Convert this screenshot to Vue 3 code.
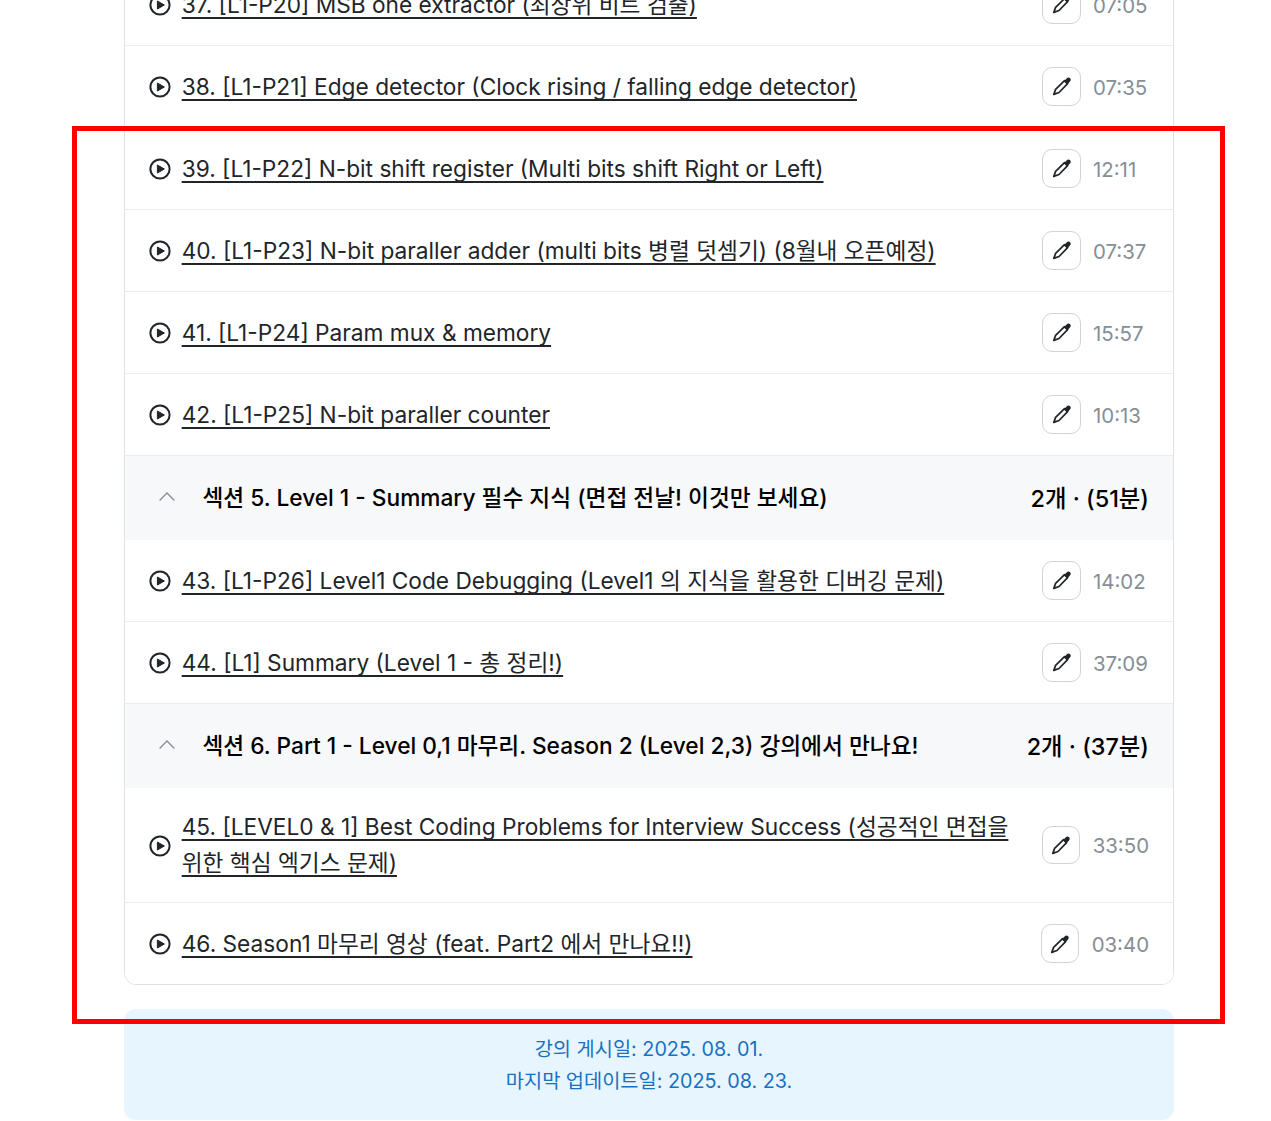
<script setup>
const items = [
  { type: 'lesson', title: '37. [L1-P20] MSB one extractor (최상위 비트 검출)', time: '07:05' },
  { type: 'lesson', title: '38. [L1-P21] Edge detector (Clock rising / falling edge detector)', time: '07:35' },
  { type: 'lesson', title: '39. [L1-P22] N-bit shift register (Multi bits shift Right or Left)', time: '12:11' },
  { type: 'lesson', title: '40. [L1-P23] N-bit paraller adder (multi bits 병렬 덧셈기) (8월내 오픈예정)', time: '07:37' },
  { type: 'lesson', title: '41. [L1-P24] Param mux & memory', time: '15:57' },
  { type: 'lesson', title: '42. [L1-P25] N-bit paraller counter', time: '10:13' },
  { type: 'section', title: '섹션 5. Level 1 - Summary 필수 지식 (면접 전날! 이것만 보세요)', meta: '2개 · (51분)' },
  { type: 'lesson', title: '43. [L1-P26] Level1 Code Debugging (Level1 의 지식을 활용한 디버깅 문제)', time: '14:02' },
  { type: 'lesson', title: '44. [L1] Summary (Level 1 - 총 정리!)', time: '37:09' },
  { type: 'section', title: '섹션 6. Part 1 - Level 0,1 마무리. Season 2 (Level 2,3) 강의에서 만나요!', meta: '2개 · (37분)' },
  { type: 'lesson', title: '45. [LEVEL0 & 1] Best Coding Problems for Interview Success (성공적인 면접을 위한 핵심 엑기스 문제)', time: '33:50' },
  { type: 'lesson', title: '46. Season1 마무리 영상 (feat. Part2 에서 만나요!!)', time: '03:40' }
]
</script>

<template>
  <div class="page">
    <div class="curriculum">
      <template v-for="item in items" :key="item.title">
        <div v-if="item.type === 'section'" class="section-row">
          <svg class="chevron" viewBox="0 0 16 9" width="16" height="9" fill="none">
            <path d="M0.6 8.5 L8 1 L15.4 8.5" stroke="#868e96" stroke-width="1.3" />
          </svg>
          <span class="section-title">{{ item.title }}</span>
          <span class="section-meta">{{ item.meta }}</span>
        </div>
        <div v-else class="lesson-row">
          <svg class="play" viewBox="0 0 22 22" width="22" height="22" fill="none">
            <circle cx="11" cy="11" r="9.6" stroke="#212529" stroke-width="2" />
            <path d="M8.4 7 L15.4 11 L8.4 15 Z" fill="#212529" stroke="#212529" stroke-width="1" stroke-linejoin="round" />
          </svg>
          <a class="lesson-title">{{ item.title }}</a>
          <button class="note-btn">
            <svg viewBox="0 0 20 20" width="20" height="20" fill="none">
              <path d="M12.5 4.6 L15.6 7.7 L7 16.5 L1.8 18.4 L3.6 13.4 Z" stroke="#212529" stroke-width="1.7" stroke-linejoin="round" />
              <path d="M11.8 5.2 L14.6 2.4 C15.8 1.2 17.2 1.2 18.1 2.2 C19 3.2 19 4.5 17.8 5.7 L15.2 8.4 Z" fill="#212529" />
            </svg>
          </button>
          <span class="lesson-time">{{ item.time }}</span>
        </div>
      </template>
    </div>
    <div class="info-box">
      <p>강의 게시일: 2025. 08. 01.</p>
      <p>마지막 업데이트일: 2025. 08. 23.</p>
    </div>
    <div class="highlight" />
  </div>
</template>

<style>
html, body {
  margin: 0;
  background: #fff;
}
</style>

<style scoped>
.page {
  position: relative;
  width: 1050px;
  margin-left: 124px;
  margin-top: -37px;
  font-family: Inter, "Noto Sans CJK KR", sans-serif;
  color: #212529;
}

.curriculum {
  border: 1px solid #dee2e6;
  border-radius: 12px;
  overflow: hidden;
}

.lesson-row {
  display: flex;
  align-items: center;
  box-sizing: border-box;
  min-height: 82px;
  padding: 21.3px 24px;
  border-bottom: 1px solid #e9ecef;
  background: #fff;
}

.lesson-row:last-child {
  min-height: 81px;
  border-bottom: 0;
}

.play {
  flex: none;
  margin-top: 1px;
  margin-right: 10.7px;
}

.lesson-title {
  flex: 1;
  font-size: 22.7px;
  line-height: 35.8px;
  text-decoration: underline;
  text-decoration-thickness: 2px;
  text-underline-offset: 4px;
  text-decoration-skip-ink: none;
  color: #212529;
  min-width: 0;
}

.note-btn {
  flex: none;
  width: 38.4px;
  height: 38.4px;
  margin: 0 12.3px 0 30px;
  padding: 0;
  display: flex;
  align-items: center;
  justify-content: center;
  background: #fff;
  border: 1px solid #ced4da;
  border-radius: 10px;
}

.lesson-time {
  flex: none;
  min-width: 56px;
  padding-top: 1px;
  font-size: 20.4px;
  color: #868e96;
}

.section-row {
  display: flex;
  align-items: center;
  height: 84px;
  padding: 0 24px 3px 34px;
  background: #f7f8fa;
  box-sizing: border-box;
}

.chevron {
  flex: none;
  margin-right: 27.5px;
}

.section-title {
  flex: 1;
  font-size: 22.7px;
  font-weight: 500;
  color: #000;
}

.section-meta {
  flex: none;
  font-size: 23.4px;
  font-weight: 500;
  color: #000;
}

.info-box {
  margin-top: 24px;
  padding: 24px;
  height: 111px;
  box-sizing: border-box;
  background: #e7f5ff;
  border-radius: 12px;
  text-align: center;
  font-size: 19.75px;
  line-height: 32px;
  color: #1971c2;
}

.info-box p {
  margin: 0;
}

.highlight {
  position: absolute;
  left: -52px;
  top: 163px;
  width: 1153px;
  height: 898px;
  box-sizing: border-box;
  border: 5px solid #ff0000;
  pointer-events: none;
}
</style>
